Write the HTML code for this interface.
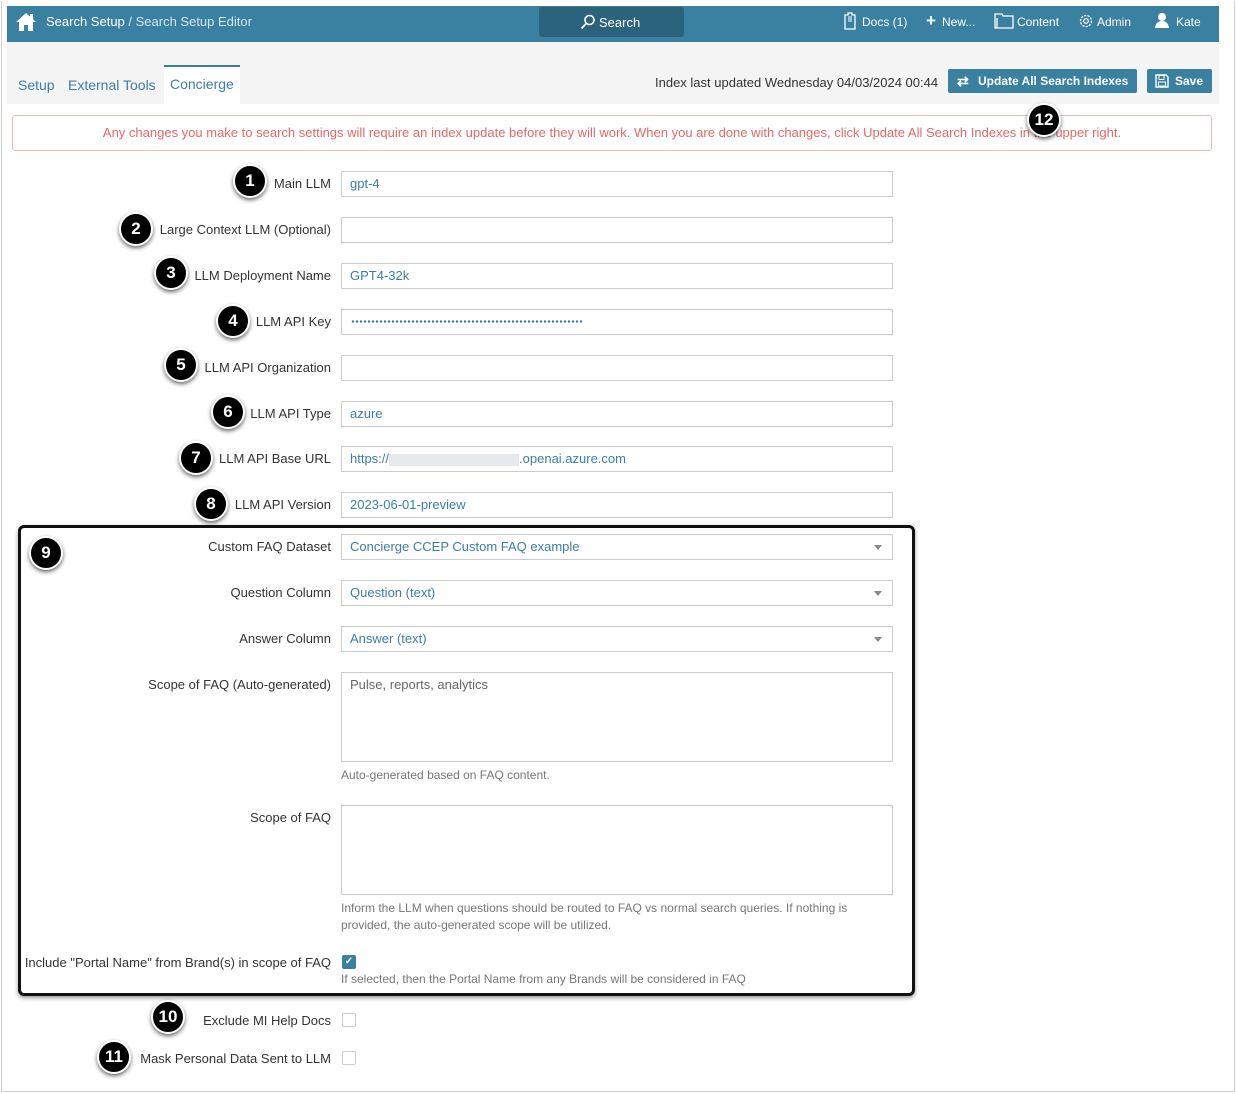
<!DOCTYPE html>
<html><head><meta charset="utf-8"><style>
*{box-sizing:border-box;margin:0;padding:0}
body{width:1236px;height:1094px;background:#fff;font-family:"Liberation Sans",Arial,sans-serif;position:relative;overflow:hidden;color:#333}
.frame{position:absolute;left:1px;top:1px;width:1234px;height:1091px;border:1px solid #d0d0d0;border-top:none}
.abs{position:absolute}
.hdr{left:7px;top:6px;width:1212px;height:36px;background:#3a80a0;color:#fff;font-size:13px}
.sub{left:7px;top:42px;width:1212px;height:62px;background:#f4f4f4}
.lbl{position:absolute;right:905px;font-size:13px;color:#333;white-space:nowrap;text-align:right}
.inp{position:absolute;left:341px;width:552px;height:26px;border:1px solid #ccc;background:#fff;font-size:13px;color:#3a7fa6;padding:5px 8px;line-height:14px}
.sel:after{content:"";position:absolute;right:10px;top:10px;border:4px solid transparent;border-top:5px solid #888}
.help{position:absolute;left:341px;font-size:12px;color:#777;line-height:17px}
.badge{position:absolute;width:34px;height:34px;border-radius:50%;background:#000;border:2px solid #fff;box-shadow:0 2px 4px rgba(0,0,0,.6);color:#fff;font-weight:bold;font-size:17px;text-align:center;line-height:30px}
.cb{position:absolute;left:342px;width:14px;height:14px;border:1px solid #ccc;border-radius:2px;background:#fff}
</style></head><body>
<div class="frame"></div>
<div class="abs hdr">
  <svg class="abs" style="left:8px;top:6px" width="22" height="20" viewBox="0 0 22 20"><path d="M11 1 L1 10 L4 10 L4 19 L9 19 L9 13 L13 13 L13 19 L18 19 L18 10 L21 10 Z" fill="#fff"/><rect x="15" y="2" width="3" height="5" fill="#fff"/></svg>
  <div class="abs" style="left:39px;top:8px">Search Setup <span style="color:#d5e5ee">/ Search Setup Editor</span></div>
  <div class="abs" style="left:532px;top:1px;width:145px;height:30px;background:#2b627c;border-radius:3px"></div>
  <svg class="abs" style="left:573px;top:8px" width="16" height="16" viewBox="0 0 16 16"><circle cx="9.5" cy="6" r="4.5" fill="none" stroke="#fff" stroke-width="1.6"/><path d="M6.3 9.3 L1.5 14.5" stroke="#fff" stroke-width="1.8"/></svg>
  <div class="abs" style="left:592px;top:9px">Search</div>
  <svg class="abs" style="left:836px;top:6px" width="14" height="18" viewBox="0 0 14 18"><path d="M2 3 H5 V1 H9 V3 H12 V17 H2 Z" fill="none" stroke="#fff" stroke-width="1.3"/><path d="M6 4 V10 M8 4 V10" stroke="#fff"/></svg>
  <div class="abs" style="left:855px;top:9px;font-size:12px">Docs (1)</div>
  <div class="abs" style="left:919px;top:5px;font-size:17px;font-weight:bold">+</div>
  <div class="abs" style="left:935px;top:9px;font-size:12px">New...</div>
  <svg class="abs" style="left:987px;top:7px" width="20" height="16" viewBox="0 0 20 16"><path d="M1 1 H8 L9 3 H19 V15 H1 Z M3 5 V15" fill="none" stroke="#fff" stroke-width="1.3"/></svg>
  <div class="abs" style="left:1010px;top:9px;font-size:12px">Content</div>
  <svg class="abs" style="left:1071px;top:7px" width="16" height="16" viewBox="0 0 16 16"><circle cx="8" cy="8" r="5.5" fill="none" stroke="#fff" stroke-width="1.3" stroke-dasharray="2.2 1.2"/><circle cx="8" cy="8" r="2.3" fill="none" stroke="#fff" stroke-width="1.2"/></svg>
  <div class="abs" style="left:1090px;top:9px;font-size:12px">Admin</div>
  <svg class="abs" style="left:1147px;top:6px" width="16" height="17" viewBox="0 0 16 17"><circle cx="8" cy="5" r="4" fill="#fff"/><path d="M1 16 Q2 9 8 9 Q14 9 15 16 Z" fill="#fff"/></svg>
  <div class="abs" style="left:1169px;top:9px;font-size:12px">Kate</div>
</div>
<div class="abs sub">
  <div class="abs" style="left:11px;top:35px;font-size:14px;color:#3a7fa6">Setup</div>
  <div class="abs" style="left:61px;top:35px;font-size:14px;color:#3a7fa6">External Tools</div>
  <div class="abs" style="left:157px;top:23px;width:76px;height:39px;background:#fff;border-top:2px solid #3a80a0"></div>
  <div class="abs" style="left:163px;top:34px;font-size:14px;color:#3a7fa6">Concierge</div>
  <div class="abs" style="left:648px;top:33px;font-size:13px;color:#333">Index last updated Wednesday 04/03/2024 00:44</div>
  <div class="abs" style="left:941px;top:27px;width:189px;height:24px;background:#3a80a0;border-radius:2px;color:#fff;font-size:12px;font-weight:bold;line-height:24px;padding-left:30px">Update All Search Indexes</div>
  <div class="abs" style="left:950px;top:31px;color:#fff;font-size:14px;font-weight:bold">⇄</div>
  <div class="abs" style="left:1140px;top:27px;width:65px;height:24px;background:#3a80a0;border-radius:2px;color:#fff;font-size:12px;font-weight:bold;line-height:24px;padding-left:28px">Save</div>
  <svg class="abs" style="left:1148px;top:32px" width="14" height="14" viewBox="0 0 14 14"><path d="M1 1 H11 L13 3 V13 H1 Z" fill="none" stroke="#fff" stroke-width="1.4"/><rect x="4" y="1.5" width="5" height="4" fill="none" stroke="#fff"/><rect x="3.5" y="8" width="7" height="4" fill="none" stroke="#fff"/></svg>
</div>
<div class="abs" style="left:12px;top:115px;width:1200px;height:36px;border:1px solid #f0b9b9;border-radius:3px;text-align:center;font-size:13px;color:#e36868;line-height:34px;white-space:nowrap">Any changes you make to search settings will require an index update before they will work. When you are done with changes, click Update All Search Indexes in the upper right.</div>

<div class="lbl" style="top:176px">Main LLM</div><div class="inp" style="top:171px">gpt-4</div>
<div class="lbl" style="top:222px">Large Context LLM (Optional)</div><div class="inp" style="top:217px"></div>
<div class="lbl" style="top:268px">LLM Deployment Name</div><div class="inp" style="top:263px">GPT4-32k</div>
<div class="lbl" style="top:314px">LLM API Key</div><div class="inp" style="top:309px"><div class="abs" style="left:9px;top:10px;width:232px;height:3px;background-image:radial-gradient(circle,#3a7fa6 1.1px,transparent 1.4px);background-size:4px 3px"></div></div>
<div class="lbl" style="top:360px">LLM API Organization</div><div class="inp" style="top:355px"></div>
<div class="lbl" style="top:406px">LLM API Type</div><div class="inp" style="top:401px">azure</div>
<div class="lbl" style="top:451px">LLM API Base URL</div><div class="inp" style="top:446px">https://<span style="display:inline-block;width:130px;height:12px;background:#e6eaee;vertical-align:middle"></span>.openai.azure.com</div>
<div class="lbl" style="top:497px">LLM API Version</div><div class="inp" style="top:492px">2023-06-01-preview</div>

<div class="abs" style="left:18px;top:525px;width:897px;height:471px;border:3px solid #111;border-radius:6px;box-shadow:0 2px 4px rgba(0,0,0,.4)"></div>
<div class="lbl" style="top:539px">Custom FAQ Dataset</div><div class="inp sel" style="top:534px">Concierge CCEP Custom FAQ example</div>
<div class="lbl" style="top:585px">Question Column</div><div class="inp sel" style="top:580px">Question (text)</div>
<div class="lbl" style="top:631px">Answer Column</div><div class="inp sel" style="top:626px">Answer (text)</div>
<div class="lbl" style="top:677px">Scope of FAQ (Auto-generated)</div><div class="inp" style="top:672px;height:90px;color:#666">Pulse, reports, analytics</div>
<div class="help" style="top:767px">Auto-generated based on FAQ content.</div>
<div class="lbl" style="top:810px">Scope of FAQ</div><div class="inp" style="top:805px;height:90px"></div>
<div class="help" style="top:900px;width:530px">Inform the LLM when questions should be routed to FAQ vs normal search queries. If nothing is provided, the auto-generated scope will be utilized.</div>
<div class="lbl" style="top:955px">Include "Portal Name" from Brand(s) in scope of FAQ</div>
<div class="cb" style="top:955px;background:#3a80a0;border-color:#3a80a0;color:#fff;font-size:10px;line-height:12px;text-align:center;font-weight:bold">✓</div>
<div class="help" style="top:971px">If selected, then the Portal Name from any Brands will be considered in FAQ</div>
<div class="lbl" style="top:1013px">Exclude MI Help Docs</div><div class="cb" style="top:1013px"></div>
<div class="lbl" style="top:1051px">Mask Personal Data Sent to LLM</div><div class="cb" style="top:1051px"></div>

<div class="badge" style="left:233px;top:164px">1</div>
<div class="badge" style="left:119px;top:212px">2</div>
<div class="badge" style="left:154px;top:256px">3</div>
<div class="badge" style="left:216px;top:304px">4</div>
<div class="badge" style="left:164px;top:348px">5</div>
<div class="badge" style="left:211px;top:395px">6</div>
<div class="badge" style="left:179px;top:441px">7</div>
<div class="badge" style="left:194px;top:487px">8</div>
<div class="badge" style="left:29px;top:536px">9</div>
<div class="badge" style="left:151px;top:1000px">10</div>
<div class="badge" style="left:97px;top:1040px">11</div>
<div class="badge" style="left:1027px;top:103px">12</div>
</body></html>
